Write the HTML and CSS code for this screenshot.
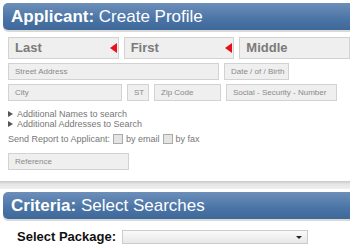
FILE: index.html
```html
<!DOCTYPE html>
<html lang="en">
<head>
    <meta charset="UTF-8">
    <title>Create Profile</title>
    <link rel="stylesheet" href="styles.css">
</head>
<body>
    <div class="section-bar"><strong>Applicant:</strong> Create Profile</div>

    <form class="profile">
        <div class="name-row">
            <div class="name-box">Last<span class="req"></span></div>
            <div class="name-box">First<span class="req"></span></div>
            <div class="name-box">Middle</div>
        </div>

        <div class="row">
            <div class="field street">Street Address</div>
            <div class="field dob">Date / of / Birth</div>
        </div>
        <div class="row">
            <div class="field city">City</div>
            <div class="field st">ST</div>
            <div class="field zip">Zip Code</div>
            <div class="field ssn">Social - Security - Number</div>
        </div>

        <div class="toggles">
            <div class="toggle">Additional Names to search</div>
            <div class="toggle">Additional Addresses to Search</div>
        </div>

        <div class="send">
            Send Report to Applicant:
            <span class="check"></span> by email
            <span class="check"></span> by fax
        </div>

        <div class="field reference">Reference</div>
    </form>

    <div class="divider"></div>

    <div class="section-bar"><strong>Criteria:</strong> Select Searches</div>

    <div class="package">
        <label>Select Package:</label>
        <div class="select"><span class="arrow"></span></div>
    </div>
</body>
</html>
```

FILE: styles.css
```css
body {
    margin: 0;
    font-family: "Liberation Sans", Arial, sans-serif;
    background: #fff;
    color: #888;
    overflow: hidden;
}

.section-bar {
    margin: 3px 0 0 3px;
    height: 27px;
    line-height: 27px;
    padding-left: 8px;
    border-radius: 5px 0 0 5px;
    background: linear-gradient(#6d8fb9, #4a74a6 60%, #3e6898);
    box-shadow: 0 2px 0 #d9d9d9;
    color: #fff;
    font-size: 17px;
}

.profile {
    padding: 7px 0 0 8px;
}

.name-row {
    display: flex;
    gap: 5px;
}

.name-box {
    position: relative;
    width: 104px;
    height: 20px;
    line-height: 20px;
    padding-left: 6px;
    background: #efefef;
    border: 1px solid #d2d2d2;
    color: #7b7b7b;
    font-size: 13px;
    font-weight: bold;
}

.req {
    position: absolute;
    right: 1px;
    top: 5px;
    width: 0;
    height: 0;
    border-top: 5px solid transparent;
    border-bottom: 5px solid transparent;
    border-right: 7px solid #e8101a;
}

.row {
    display: flex;
    gap: 5px;
    margin-top: 4px;
}

.field {
    height: 15px;
    line-height: 15px;
    padding-left: 6px;
    background: #efefef;
    border: 1px solid #d2d2d2;
    color: #8a8a8a;
    font-size: 8px;
}

.street { width: 203px; }
.dob { width: 57px; }
.city { width: 106px; }
.st { width: 14px; }
.zip { width: 59px; }
.ssn { width: 103px; }

.toggles {
    margin-top: 8px;
    font-size: 9px;
    color: #777;
    line-height: 10px;
}

.toggle::before {
    content: "";
    display: inline-block;
    margin-right: 4px;
    border-top: 3px solid transparent;
    border-bottom: 3px solid transparent;
    border-left: 5px solid #555;
}

.send {
    margin-top: 5px;
    font-size: 9px;
    color: #777;
    display: flex;
    align-items: center;
    gap: 3px;
}

.check {
    display: inline-block;
    width: 8px;
    height: 8px;
    border: 1px solid #aaa;
    background: #e4e4e4;
}

.reference {
    width: 113px;
    margin-top: 9px;
}

.divider {
    margin-top: 11px;
    height: 8px;
    background: linear-gradient(#c8c8c8, #e6e6e6 40%, #eeeeee);
}

.package {
    display: flex;
    align-items: center;
    padding: 10px 0 0 17px;
}

.package label {
    width: 105px;
    color: #111;
    font-size: 13px;
    font-weight: bold;
}

.select {
    position: relative;
    width: 184px;
    height: 12px;
    border: 1px solid #ccc;
    background: linear-gradient(#fafafa, #e8e8e8);
}

.arrow {
    position: absolute;
    right: 5px;
    top: 5px;
    border-left: 3px solid transparent;
    border-right: 3px solid transparent;
    border-top: 3px solid #222;
}
```
